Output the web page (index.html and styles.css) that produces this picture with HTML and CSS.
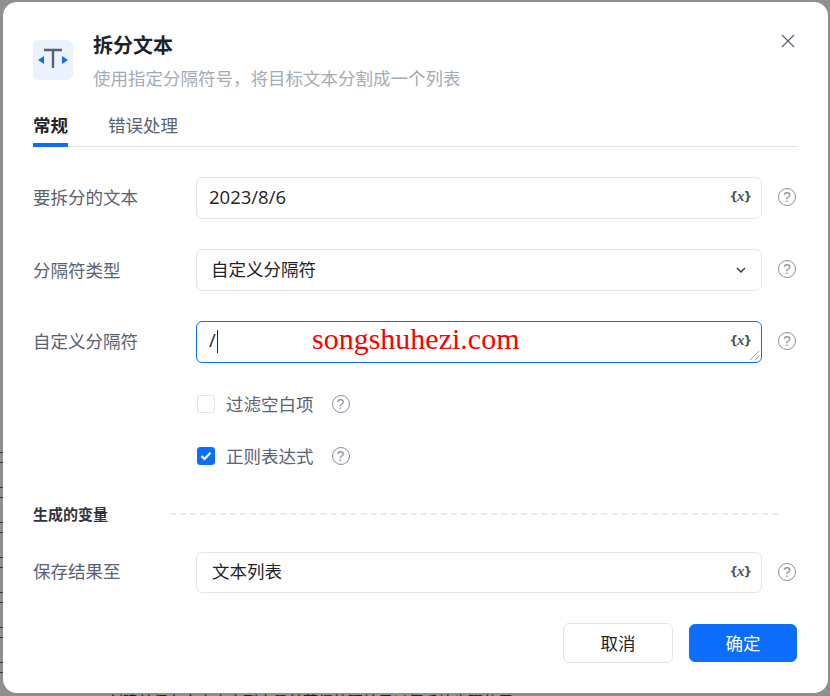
FILE: index.html
```html
<!DOCTYPE html>
<html lang="zh-CN">

<head>
    <meta charset="UTF-8">
    <meta name="viewport" content="width=device-width, initial-scale=1.0">
    <title>拆分文本</title>
    <link rel="stylesheet" href="styles.css">
</head>
<body>
    <div class="backdrop-text">创建并保存文本内容到变量并获得处理结果以便后续步骤使用</div>
    <div class="backdrop-marks">
        <span></span><span></span><span></span><span></span><span></span><span></span><span></span>
    </div>
    <div class="modal">
        <button class="close" type="button" aria-label="关闭">
            <svg width="14" height="14" viewBox="0 0 14 14"><path d="M1 1l12 12M13 1L1 13" fill="none" stroke="#5f6675" stroke-width="1.3"/></svg>
        </button>

        <div class="header">
            <div class="logo">
                <svg width="40" height="40" viewBox="0 0 40 40">
                    <path d="M11 10h18M20 9v19" fill="none" stroke="#5a6170" stroke-width="2.400"/>
                    <path d="M11 16v8l-6-4zM29 16v8l6-4z" fill="#0d6efd"/>
                </svg>
            </div>
            <div>
                <div class="title">拆分文本</div>
                <div class="subtitle">使用指定分隔符号，将目标文本分割成一个列表</div>
            </div>
        </div>

        <div class="tabs">
            <div class="tab active">常规</div>
            <div class="tab">错误处理</div>
        </div>

        <div class="row first">
            <div class="label">要拆分的文本</div>
            <div class="field">
                <span class="value latin">2023/8/6</span>
                <span class="var-btn">{<i>x</i>}</span>
            </div>
            <span class="help">?</span>
        </div>

        <div class="row">
            <div class="label mid">分隔符类型</div>
            <div class="field select">
                <span class="value">自定义分隔符</span>
                <svg width="10" height="6" viewBox="0 0 10 6"><path d="M1 1l4 4 4-4" fill="none" stroke="#30343c" stroke-width="1.400"/></svg>
            </div>
            <span class="help">?</span>
        </div>

        <div class="row">
            <div class="label">自定义分隔符</div>
            <div class="field focused">
                <span class="value latin">/<span class="caret"></span></span>
                <span class="var-btn">{<i>x</i>}</span>
                <svg class="resize" width="11" height="11" viewBox="0 0 11 11"><path d="M1 10l9-9M6 10l4-4" fill="none" stroke="#9aa0aa" stroke-width="1"/></svg>
            </div>
            <span class="help">?</span>
        </div>

        <div class="check-row first-check">
            <span class="box"></span>
            <span class="check-text">过滤空白项</span>
            <span class="help">?</span>
        </div>

        <div class="check-row second-check">
            <span class="box on">
                <svg width="12" height="10" viewBox="0 0 12 10"><path d="M1.500 5l3 3 6-6.200" fill="none" stroke="#fff" stroke-width="2.200"/></svg>
            </span>
            <span class="check-text">正则表达式</span>
            <span class="help">?</span>
        </div>

        <div class="section">
            <span class="section-name">生成的变量</span>
            <span class="dash"></span>
        </div>

        <div class="row last">
            <div class="label">保存结果至</div>
            <div class="field short">
                <span class="value">文本列表</span>
                <span class="var-btn">{<i>x</i>}</span>
            </div>
            <span class="help">?</span>
        </div>

        <div class="footer">
            <button class="btn" type="button">取消</button>
            <button class="btn primary" type="button">确定</button>
        </div>

        <div class="watermark">songshuhezi.com</div>
    </div>
</body>

</html>
```

FILE: styles.css
```css
* {
    box-sizing: border-box;
}

html, body {
    height: 100%;
}

body {
    margin: 0;
    padding: 2px 2px 3px 3px;
    background-color: #8f8f8f;
    font-family: "Noto Sans CJK SC", "Noto Sans", sans-serif;
    font-size: 17.5px;
    color: #1f2329;
    overflow: hidden;
}

.backdrop-text {
    position: absolute;
    left: 108px;
    top: 691px;
    font-size: 15px;
    line-height: 20px;
    white-space: nowrap;
    color: #222;
}

.backdrop-marks {
    position: absolute;
    left: 0;
    top: 452px;
    display: flex;
    flex-direction: column;
    gap: 24px;
    width: 3px;
}

.backdrop-marks span {
    height: 11px;
    border-top: 1px solid #333;
    border-bottom: 1px solid #333;
}

.modal {
    position: relative;
    height: 691px;
    padding: 30px 30px 0;
    background-color: #fff;
    border-radius: 14px;
}

.close {
    position: absolute;
    right: 33px;
    top: 32px;
    padding: 0;
    width: 14px;
    height: 14px;
    border: none;
    background: none;
    display: flex;
}

.header {
    display: flex;
    gap: 20px;
}

.logo {
    width: 40px;
    height: 40px;
    margin-top: 8px;
    background-color: #eaf2fe;
    border-radius: 6px;
}

.title {
    font-size: 20px;
    font-weight: 700;
    line-height: 26px;
}

.subtitle {
    margin-top: 8px;
    line-height: 24px;
    color: #a7abb3;
}

.tabs {
    display: flex;
    gap: 40px;
    height: 57px;
    padding-top: 22px;
    border-bottom: 1px solid #e3e5ec;
}

.tab {
    height: 35px;
    line-height: 26px;
    color: #5a6170;
}

.tab.active {
    font-weight: 700;
    color: #1f2329;
    border-bottom: 4px solid #0d6efd;
}

.row {
    display: grid;
    grid-template-columns: 163px 566px 36px;
    align-items: center;
    margin-top: 30px;
}

.row.last {
    margin-top: 27px;
}

.label {
    padding-bottom: 4px;
    color: #5a6170;
}

.label.mid {
    padding-bottom: 2px;
}

.field {
    position: relative;
    display: flex;
    align-items: center;
    justify-content: space-between;
    height: 42px;
    padding: 0 10px 0 12px;
    border: 1px solid #e3e5ec;
    border-radius: 6px;
}

.field.select {
    padding: 0 15px 0 14px;
}

.field.focused {
    border-color: #0d6efd;
}

.field.short {
    height: 41px;
    padding-left: 15px;
}

.field.short .value {
    padding-bottom: 5px;
}

.value {
    padding-bottom: 3px;
    color: #1f2329;
}

.value.latin {
    padding-bottom: 4px;
    font-family: "Open Sans", sans-serif;
    font-size: 18.5px;
}

.caret {
    display: inline-block;
    width: 1px;
    height: 23px;
    margin-left: 1px;
    background-color: #1f2329;
    vertical-align: middle;
}

.var-btn {
    padding-bottom: 3px;
    font-size: 12px;
    font-weight: 700;
    color: #4b5563;
    font-family: "DejaVu Sans", sans-serif;
    letter-spacing: -1px;
}

.var-btn i {
    font-family: "Liberation Serif", serif;
    font-size: 15px;
}

.resize {
    position: absolute;
    right: 1px;
    bottom: 1px;
}

.help {
    justify-self: end;
    display: flex;
    align-items: center;
    justify-content: center;
    width: 18px;
    height: 18px;
    margin: 0 2px 2px 0;
    border: 1.800px solid #8b909b;
    border-radius: 50%;
    font-size: 14px;
    line-height: 1;
    color: #8b909b;
    font-family: "Liberation Sans", sans-serif;
}

.check-row {
    display: flex;
    align-items: center;
    height: 24px;
    padding-left: 164px;
}

.first-check {
    margin-top: 29px;
}

.second-check {
    margin-top: 28px;
}

.box {
    display: flex;
    align-items: center;
    justify-content: center;
    width: 18px;
    height: 18px;
    margin-right: 11px;
    border: 1px solid #e3e5ec;
    border-radius: 3px;
}

.box.on {
    background-color: #0d6efd;
    border-color: #0d6efd;
}

.check-text {
    padding-bottom: 2px;
    color: #5a6170;
}

.check-row .help {
    margin: 0 0 0 18px;
}

.section {
    display: flex;
    align-items: center;
    height: 20px;
    margin-top: 37px;
    padding-right: 20px;
}

.section-name {
    padding-bottom: 4px;
    font-size: 15px;
    font-weight: 700;
    color: #30343c;
}

.dash {
    flex: 1;
    margin: 0 0 2px 62px;
    border-top: 2px dashed #e9ebf0;
}

.footer {
    display: flex;
    justify-content: flex-end;
    align-items: center;
    gap: 16px;
    margin-top: 30px;
    padding-right: 1px;
}

.btn {
    width: 110px;
    height: 40px;
    padding: 0 0 2px;
    background-color: #fff;
    border: 1px solid #e3e5ec;
    border-radius: 6px;
    font-family: inherit;
    font-size: 17.5px;
    color: #1f2329;
}

.btn.primary {
    width: 108px;
    height: 38px;
    background-color: #0d6efd;
    border-color: #0d6efd;
    color: #fff;
}

.watermark {
    position: absolute;
    left: 309px;
    top: 319px;
    font-family: "Liberation Serif", serif;
    font-size: 30px;
    line-height: 36px;
    color: #ff0000;
}
```
